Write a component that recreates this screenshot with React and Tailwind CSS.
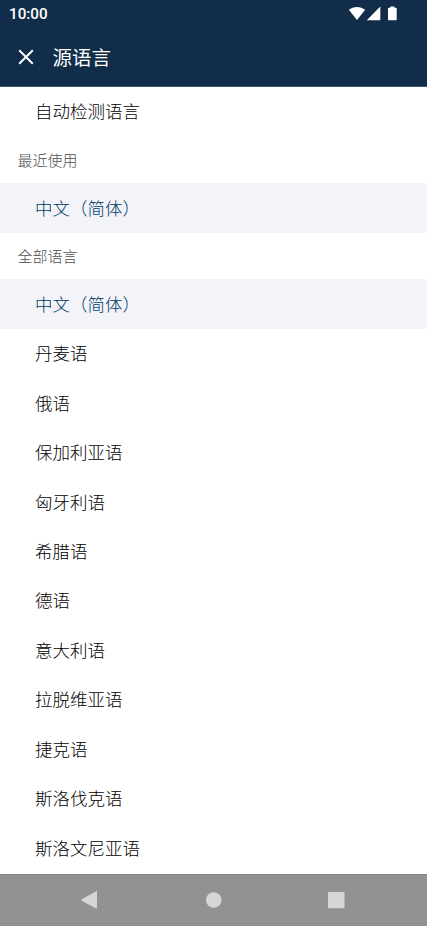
const languages = ['丹麦语', '俄语', '保加利亚语', '匈牙利语', '希腊语', '德语', '意大利语', '拉脱维亚语', '捷克语', '斯洛伐克语', '斯洛文尼亚语'];

function SectionLabel({ children }) {
  return <h2 className="flex h-[46px] items-center pt-px pl-[17.5px] text-[15px] font-light text-[#4f4f4f]">{children}</h2>;
}

function LanguageRow({ name, selected }) {
  return (
    <li
      className={
        selected
          ? 'flex h-[50px] items-center bg-[#f2f4f8] pt-px pl-[35px] text-[17.5px] font-light text-[#003a66]'
          : 'flex h-[49.45px] items-center pb-[0.6px] pl-[35px] text-[17.5px] font-light text-black'
      }
    >
      {name}
    </li>
  );
}

function StatusIcons() {
  return (
    <svg className="mr-[29px] h-[16px] w-[50px]" viewBox="0 0 50 16" fill="#ffffff" aria-hidden="true">
      <path d="M.8 3.8C5.2 -.1 12.8 -.1 17.2 3.8L9 14.1Z" />
      <path d="M32.3 .5V14.3H18.8Z" />
      <path d="M42.3 .5h4.1v1.3h1.5q.8 0 .8.8v10.8q0 .9-.8.9h-7.1q-.8 0-.8-.9V2.6q0-.8.8-.8h1.5Z" />
    </svg>
  );
}

export default function App() {
  return (
    <div className="flex h-[926px] w-[427px] flex-col overflow-hidden bg-white font-['Noto_Sans_CJK_SC',sans-serif]">
      <header className="h-[87px] shrink-0 border-b border-[#42576d] bg-[#112d49] text-white">
        <div className="flex h-[27px] items-center justify-between pl-[9px]">
          <span className="pt-[2px] font-[Roboto,sans-serif] text-[15.2px] font-medium">10:00</span>
          <StatusIcons />
        </div>
        <div className="flex h-[59px] items-center pl-[18px]">
          <svg className="h-4 w-4" viewBox="0 0 16 16" fill="none" stroke="#ffffff" strokeWidth="2" aria-hidden="true">
            <path d="M1.2 1.2 14.8 14.8M14.8 1.2 1.2 14.8" />
          </svg>
          <h1 className="pl-[18.5px] text-[19.5px] font-normal">源语言</h1>
        </div>
      </header>

      <main className="min-h-0 flex-1 overflow-hidden">
        <ul className="h-[50px]">
          <LanguageRow name="自动检测语言" />
        </ul>
        <SectionLabel>最近使用</SectionLabel>
        <ul>
          <LanguageRow name="中文（简体）" selected />
        </ul>
        <SectionLabel>全部语言</SectionLabel>
        <ul>
          <LanguageRow name="中文（简体）" selected />
          {languages.map((name) => (
            <LanguageRow key={name} name={name} />
          ))}
        </ul>
      </main>

      <nav className="h-[52px] shrink-0 border-t border-[#858585] bg-[#929292]">
        <svg className="h-[51px] w-[427px]" viewBox="0 0 427 51" fill="#d6d6d6" aria-hidden="true">
          <path d="M81.7 24.3 96.2 16.2Q97 15.8 97 16.7V33Q97 33.9 96.2 33.5L81.7 25.7Q81 25 81.7 24.3Z" />
          <circle cx="213.7" cy="25" r="7.8" />
          <rect x="328" y="17" width="16.5" height="16.2" rx="1" />
        </svg>
      </nav>
    </div>
  );
}
